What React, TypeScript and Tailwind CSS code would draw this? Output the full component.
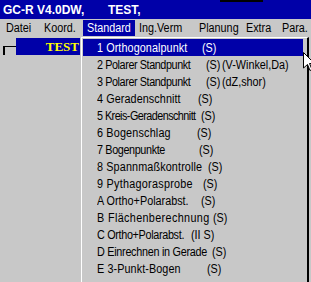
import React from 'react';

const menus = [
    { label: 'Datei', w: 'w-[38px]' },
    { label: 'Koord.', w: 'w-[43px]' },
    { label: 'Standard', w: 'w-[52px]', active: true },
    { label: 'Ing.Verm', w: 'w-[60px]' },
    { label: 'Planung', w: 'w-[47px]' },
    { label: 'Extra', w: 'w-[36px]' },
    { label: 'Para.', w: 'w-[33px]' },
];

// label column width = x of the suffix minus x of the label
const items = [
    { label: '1 Orthogonalpunkt', suffix: '(S)', w: 'w-[105px]', t: 'tracking-[0.1px]', active: true },
    { label: '2 Polarer Standpunkt', suffix: '(S)', extra: '(V-Winkel,Da)', w: 'w-[109px]', t: 'tracking-[-0.45px]' },
    { label: '3 Polarer Standpunkt', suffix: '(S)', extra: '(dZ,shor)', w: 'w-[109px]', t: 'tracking-[-0.45px]' },
    { label: '4 Geradenschnitt', suffix: '(S)', w: 'w-[101px]', t: 'tracking-[0.1px]' },
    { label: '5 Kreis-Geradenschnitt', suffix: '(S)', w: 'w-[104px]', t: 'tracking-[-0.6px]' },
    { label: '6 Bogenschlag', suffix: '(S)', w: 'w-[100px]', t: 'tracking-[0.2px]' },
    { label: '7 Bogenpunkte', suffix: '(S)', w: 'w-[102px]', t: 'tracking-[-0.4px]' },
    { label: '8 Spannmaßkontrolle', suffix: '(S)', w: 'w-[111px]', t: 'tracking-[0.15px]' },
    { label: '9 Pythagorasprobe', suffix: '(S)', w: 'w-[106px]', t: 'tracking-[0.3px]' },
    { label: 'A Ortho+Polarabst.', suffix: '(S)', w: 'w-[104px]', t: 'tracking-[0px]' },
    { label: 'B Flächenberechnung', suffix: '(S)', w: 'w-[116px]', t: 'tracking-[0.4px]' },
    { label: 'C Ortho+Polarabst.', suffix: '(II S)', w: 'w-[94px]', t: 'tracking-[-0.35px]' },
    { label: 'D Einrechnen in Gerade', suffix: '(S)', w: 'w-[115px]', t: 'tracking-[-0.3px]' },
    { label: 'E 3-Punkt-Bogen', suffix: '(S)', w: 'w-[110px]', t: 'tracking-[0.1px]' },
];

// narrow, tall text like the old bitmap system font
const narrow = 'inline-block origin-left scale-x-90';

export default function App() {
    return (
        <div className="relative h-[282px] w-[311px] overflow-hidden bg-[#c8c8c8] font-['Liberation_Sans',Arial,sans-serif] text-[12px] text-black">
            {/* Title bar */}
            <div className="relative flex h-[19px] items-center bg-[#0000a8] pl-[3px] text-[12px] font-bold text-white">
                <div className="absolute top-0 left-[220px] h-[2px] w-[43px] bg-black" />
                <span className="w-[105px] whitespace-nowrap">GC-R V4.0DW,</span>
                <span>TEST,</span>
            </div>

            {/* Menu bar */}
            <div className="flex h-[18px] pl-[2px]">
                {menus.map((m) => (
                    <div
                        key={m.label}
                        className={`${m.w} my-[1px] flex items-center pl-[4px] whitespace-nowrap ${m.active ? 'bg-[#0000a8] text-white' : ''}`}
                    >
                        <span className={narrow}>{m.label}</span>
                    </div>
                ))}
            </div>

            {/* Work area */}
            <div className="flex items-start pt-[1px]">
                <div className="mt-[8px] ml-[3px] h-[9px] w-[13px] border-t border-l-2 border-black" />
                <div className="flex h-[17px] w-[64px] items-center justify-end bg-[#0000a8] pr-[1px] font-['Liberation_Serif','Times_New_Roman',serif] text-[13px] font-bold text-[#ffff00]">
                    TEST
                </div>
            </div>

            {/* Dropdown */}
            <div className="absolute top-[37px] left-[81px] h-[260px] w-[228px] border-t border-r-2 border-l border-t-white border-r-black border-l-white bg-[#c8c8c8] pt-[1px] pr-[4px] pl-[1px]">
                {items.map((it) => (
                    <div
                        key={it.label}
                        className={`flex h-[17px] items-center pl-[14px] whitespace-nowrap ${it.active ? 'bg-[#0000a8] text-white' : ''}`}
                    >
                        <span className={`${it.w} shrink-0`}>
                            <span className={`${narrow} ${it.t}`}>{it.label}</span>
                        </span>
                        {it.extra ? (
                            <span className="w-[16px] shrink-0">
                                <span className={narrow}>{it.suffix}</span>
                            </span>
                        ) : (
                            <span className={narrow}>{it.suffix}</span>
                        )}
                        {it.extra && <span className={narrow}>{it.extra}</span>}
                    </div>
                ))}
            </div>

            {/* Mouse cursor */}
            <svg className="absolute top-[52px] left-[303px]" width="12" height="20" viewBox="0 0 12 20">
                <path d="M0.5 0.5 L0.5 16 L4.5 12.5 L7 18.5 L9 17.5 L6.5 11.5 L11.5 11.5 Z" fill="#fff" stroke="#000" strokeWidth="1" />
            </svg>
        </div>
    );
}
